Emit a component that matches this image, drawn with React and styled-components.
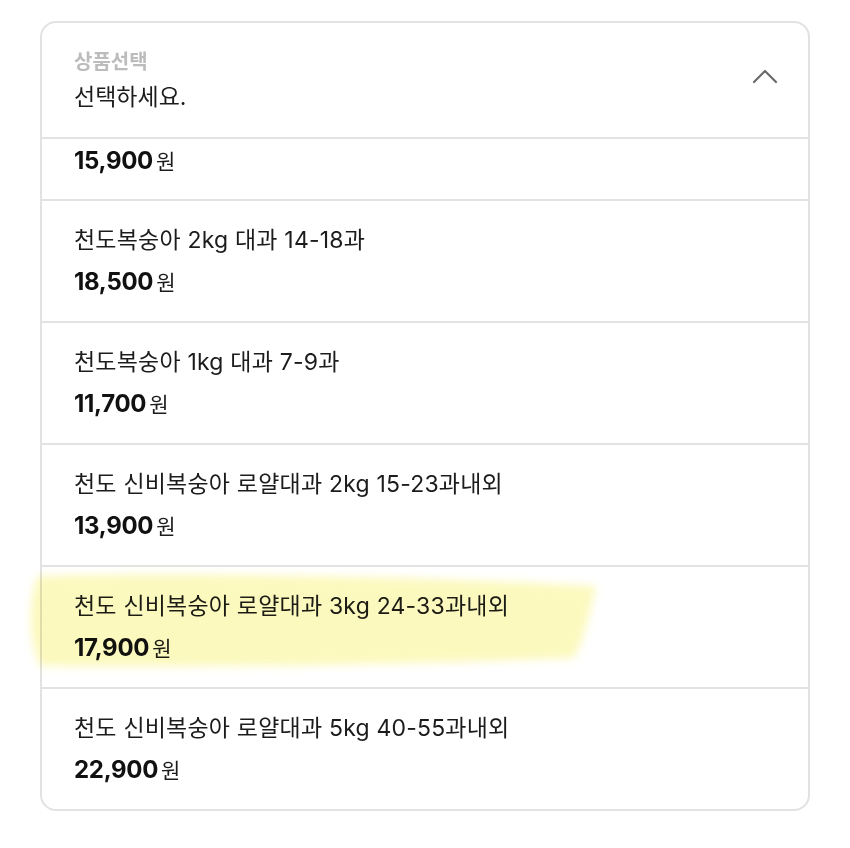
import React from "react";
import styled, { createGlobalStyle } from "styled-components";

const GlobalStyle = createGlobalStyle`
  html, body {
    margin: 0;
    padding: 0;
    background: #ffffff;
  }
  body {
    font-family: "Inter", "Noto Sans CJK KR", sans-serif;
    color: #1a1a1a;
  }
`;

const Page = styled.div`
  position: relative;
  padding: 21px 40px 36px 40px;
  width: 770px;
`;

const Card = styled.div`
  border: 2px solid #e2e2e2;
  border-radius: 16px;
  background: #fff;
  overflow: hidden;
`;

const Header = styled.div`
  display: flex;
  align-items: center;
  justify-content: space-between;
  height: 114px;
  padding: 0 30px 0 32px;
  border-bottom: 2px solid #e2e2e2;
`;

const HeaderText = styled.div`
  display: flex;
  flex-direction: column;
  gap: 7px;
`;

const Label = styled.div`
  font-family: "Noto Sans CJK KR", sans-serif;
  font-size: 20px;
  font-weight: 700;
  color: #bcbcbc;
  line-height: 26px;
`;

const Placeholder = styled.div`
  font-family: "Inter", "Noto Sans CJK KR", sans-serif;
  font-size: 23px;
  color: #1c1c1c;
  line-height: 32px;
`;

const Chevron = styled.svg`
  width: 26px;
  height: 16px;
  margin-bottom: 8px;
`;

const Option = styled.div`
  display: flex;
  flex-direction: column;
  justify-content: ${(p) => (p.$partial ? "flex-start" : "center")};
  gap: 9px;
  box-sizing: content-box;
  height: ${(p) => (p.$partial ? "55px" : "120px")};
  padding: ${(p) => (p.$partial ? "5px 32px 0" : "0 32px")};
  border-bottom: ${(p) => (p.$last ? "none" : "2px solid #e2e2e2")};
`;

const Name = styled.div`
  font-family: "Inter", "Noto Sans CJK KR", sans-serif;
  font-size: 23px;
  line-height: 32px;
  color: #1c1c1c;
  letter-spacing: 0.2px;
`;

const Price = styled.div`
  display: flex;
  align-items: baseline;
  gap: 3px;
  line-height: 32px;
`;

const Amount = styled.span`
  font-family: "Inter", "Noto Sans CJK KR", sans-serif;
  font-size: 24px;
  font-weight: 700;
  letter-spacing: -0.3px;
  color: #111;
`;

const Won = styled.span`
  font-family: "Noto Sans CJK KR", sans-serif;
  font-size: 21px;
  color: #1c1c1c;
`;

const Highlight = styled.svg`
  position: absolute;
  left: 0;
  top: 0;
  width: 850px;
  height: 848px;
  pointer-events: none;
  mix-blend-mode: multiply;
`;

const options = [
  { name: "천도복숭아 2kg 대과 14-18과", price: "18,500" },
  { name: "천도복숭아 1kg 대과 7-9과", price: "11,700" },
  { name: "천도 신비복숭아 로얄대과 2kg 15-23과내외", price: "13,900" },
  { name: "천도 신비복숭아 로얄대과 3kg 24-33과내외", price: "17,900" },
  { name: "천도 신비복숭아 로얄대과 5kg 40-55과내외", price: "22,900" },
];

export default function App() {
  return (
    <>
      <GlobalStyle />
      <Page>
        <Card>
          <Header>
            <HeaderText>
              <Label>상품선택</Label>
              <Placeholder>선택하세요.</Placeholder>
            </HeaderText>
            <Chevron viewBox="0 0 26 16" fill="none">
              <path d="M2 14 L13 3 L24 14" stroke="#6b6b6b" strokeWidth="2.2" strokeLinecap="round" strokeLinejoin="round" />
            </Chevron>
          </Header>
          <Option $partial>
            <Price>
              <Amount>15,900</Amount>
              <Won>원</Won>
            </Price>
          </Option>
          {options.map((o, i) => (
            <Option key={o.name} $last={i === options.length - 1}>
              <Name>{o.name}</Name>
              <Price>
                <Amount>{o.price}</Amount>
                <Won>원</Won>
              </Price>
            </Option>
          ))}
        </Card>
        {/* highlighter mark drawn over the 3kg option */}
        <Highlight viewBox="0 0 850 848">
          <defs>
            <filter id="soft" x="-10%" y="-30%" width="120%" height="160%">
              <feGaussianBlur stdDeviation="4" />
            </filter>
          </defs>
          <path
            d="M38 576 C180 572 420 576 596 586 C590 612 584 640 574 658 C420 664 220 668 40 666 C28 640 28 600 38 576 Z"
            fill="#fbf7a6"
            opacity="0.72"
            filter="url(#soft)"
          />
        </Highlight>
      </Page>
    </>
  );
}
